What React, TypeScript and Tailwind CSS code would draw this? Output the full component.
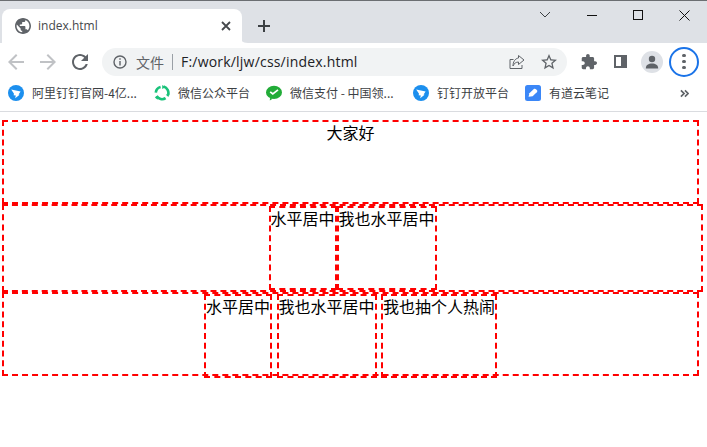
import React from "react";

const cjk = '"Noto Sans CJK SC", "Noto Sans", sans-serif';

function Dingtalk() {
  return (
    <svg width="16" height="16" viewBox="0 0 16 16" className="shrink-0">
      <circle cx="8" cy="8" r="8" fill="#1c8fee" />
      <path d="M3.2 4.6 L12.6 6.4 L10.6 9.6 L11.6 9.7 L7.2 13.2 L7.8 10.6 L5.6 10.2 L6 8.8 Z" fill="#fff" />
    </svg>
  );
}

function GreenRing() {
  return (
    <svg width="16" height="16" viewBox="0 0 16 16" className="shrink-0" fill="none">
      <path d="M9.6 1.6 A6.4 6.4 0 0 1 14 10" stroke="#19c27a" strokeWidth="2.6" />
      <path d="M11.6 13.2 A6.4 6.4 0 0 1 2.6 11" stroke="#19c27a" strokeWidth="2.6" />
      <path d="M1.8 7.6 A6.4 6.4 0 0 1 6.6 1.9" stroke="#19c27a" strokeWidth="2.6" />
      <path d="M8.2 0 L11.4 2.2 L8.2 4 Z M15.6 8.4 L14.4 12 L11.8 9.8 Z M3.6 14.8 L0.8 12.4 L4 10.8 Z" fill="#19c27a" />
    </svg>
  );
}

function WechatPay() {
  return (
    <svg width="16" height="16" viewBox="0 0 16 16" className="shrink-0">
      <ellipse cx="8" cy="7.4" rx="8" ry="6.6" fill="#22ac38" />
      <path d="M4 13 L3.8 15.6 L7 13.6 Z" fill="#22ac38" />
      <path d="M4.2 6.8 L6.8 9 L12 4.8" stroke="#fff" strokeWidth="1.7" fill="none" />
    </svg>
  );
}

function Youdao() {
  return (
    <svg width="16" height="16" viewBox="0 0 16 16" className="shrink-0">
      <rect width="16" height="16" rx="2.5" fill="#3b87f7" />
      <path d="M3.6 11.8 L4.4 8.2 L8.8 4 C9.6 3.4 10.4 3.6 11 4.2 L12 5.2 C12.5 5.8 12.4 6.6 11.8 7.2 L7.6 11.2 Z" fill="#fff" />
    </svg>
  );
}

function Bookmark({ icon, text, className }: { icon: React.ReactNode; text: string; className: string }) {
  return (
    <div className={`flex items-center gap-2 shrink-0 ${className}`}>
      {icon}
      <span className="text-[12px] leading-4 text-[#3c4043] whitespace-nowrap" style={{ fontFamily: cjk }}>
        {text}
      </span>
    </div>
  );
}

function Box({ w, h, className, children }: { w: string; h: string; className?: string; children?: React.ReactNode }) {
  return (
    <div
      className={`${w} ${h} shrink-0 border-2 border-dashed border-[#ff0000] text-[16px] leading-[21px] text-black whitespace-nowrap ${className ?? ""}`}
      style={{ fontFamily: cjk }}
    >
      {children}
    </div>
  );
}

export default function App() {
  return (
    <div className="w-[707px] h-[447px] bg-white overflow-hidden flex flex-col">
      {/* tab strip */}
      <div className="h-[43px] shrink-0 bg-[#dee1e6] border-t border-[#6b6e72] flex items-end relative">
        <div className="ml-[2px] w-[240px] h-[34px] bg-white rounded-t-[8px] flex items-center relative">
          <svg width="16" height="16" viewBox="2 2 20 20" className="ml-[13px]" fill="#5f6368">
            <path d="M12 2C6.48 2 2 6.48 2 12s4.48 10 10 10 10-4.48 10-10S17.52 2 12 2zm-1 17.93c-3.95-.49-7-3.85-7-7.93 0-.62.08-1.21.21-1.79L9 15v1c0 1.1.9 2 2 2v1.93zm6.9-2.54c-.26-.81-1-1.39-1.9-1.39h-1v-3c0-.55-.45-1-1-1H8v-2h2c.55 0 1-.45 1-1V7h2c1.1 0 2-.9 2-2v-.41c2.93 1.19 5 4.06 5 7.41 0 2.08-.8 3.97-2.1 5.39z" />
          </svg>
          <span className="ml-[7px] text-[12px] text-[#45484c]" style={{ fontFamily: '"Open Sans", sans-serif' }}>
            index.html
          </span>
          <svg width="10" height="10" viewBox="0 0 10 10" className="ml-auto mr-[11px]" stroke="#45484c" strokeWidth="1.8">
            <path d="M1 1 L9 9 M9 1 L1 9" />
          </svg>
          <svg width="8" height="8" viewBox="0 0 8 8" className="absolute right-[-6px] bottom-0" fill="#fff">
            <path d="M0 0 C0 5 2 8 8 8 L0 8 Z" />
          </svg>
        </div>
        <svg width="12" height="12" viewBox="0 0 12 12" className="ml-[16px] mb-[11px]" stroke="#3c4043" strokeWidth="2">
          <path d="M6 0 V12 M0 6 H12" />
        </svg>
        <div className="ml-auto h-full flex items-start">
          <svg width="12" height="8" viewBox="0 0 12 8" className="mt-[10px] mr-[36px]" fill="none" stroke="#3c4043" strokeWidth="1">
            <path d="M1 1 L6 6 L11 1" />
          </svg>
          <svg width="10" height="10" viewBox="0 0 10 10" className="mt-[9px] mr-[36px]" stroke="#111" strokeWidth="1">
            <path d="M0 5.5 H10" />
          </svg>
          <svg width="10" height="10" viewBox="0 0 10 10" className="mt-[9px] mr-[36px]" fill="none" stroke="#111" strokeWidth="1">
            <rect x="0.5" y="0.5" width="9" height="9" />
          </svg>
          <svg width="11" height="11" viewBox="0 0 11 11" className="mt-[9px] mr-[17px]" stroke="#111" strokeWidth="1">
            <path d="M0.5 0.5 L10.5 10.5 M10.5 0.5 L0.5 10.5" />
          </svg>
        </div>
      </div>

      {/* toolbar */}
      <div className="h-[37px] shrink-0 bg-white flex items-center">
        <svg width="16" height="16" viewBox="4 4 16 16" className="ml-[8px]" fill="#c0c2c5">
          <path d="M20 11H7.83l5.59-5.59L12 4l-8 8 8 8 1.41-1.41L7.83 13H20v-2z" />
        </svg>
        <svg width="16" height="16" viewBox="4 4 16 16" className="ml-[16px]" fill="#c0c2c5">
          <path d="M12 4l-1.41 1.41L16.17 11H4v2h12.17l-5.58 5.59L12 20l8-8z" />
        </svg>
        <svg width="16" height="16" viewBox="4 4 16 16" className="ml-[16px]" fill="#5f6368">
          <path d="M17.65 6.35C16.2 4.9 14.21 4 12 4c-4.42 0-7.99 3.58-7.99 8s3.57 8 7.99 8c3.73 0 6.84-2.55 7.73-6h-2.08c-.82 2.33-3.04 4-5.65 4-3.31 0-6-2.69-6-6s2.69-6 6-6c1.66 0 3.14.69 4.22 1.78L13 11h7V4l-2.35 2.35z" />
        </svg>
        <div className="ml-[14px] w-[465px] h-[28px] rounded-full bg-[#f1f3f4] flex items-center">
          <svg width="14" height="14" viewBox="0 0 14 14" className="ml-[11px]" fill="none" stroke="#5f6368" strokeWidth="1.4">
            <circle cx="7" cy="7" r="6" />
            <path d="M7 6 V10.5 M7 3.2 V4.8" />
          </svg>
          <span className="ml-[9px] text-[14px] leading-5 text-[#5f6368]" style={{ fontFamily: cjk }}>
            文件
          </span>
          <div className="ml-[8px] w-px h-[16px] bg-[#9aa0a6]" />
          <span className="ml-[8px] text-[14px] leading-5 tracking-[0.2px] text-[#202124]" style={{ fontFamily: '"Open Sans", sans-serif' }}>
            F:/work/ljw/css/index.html
          </span>
          <svg width="16" height="16" viewBox="0 0 16 16" className="ml-auto" fill="none" stroke="#5f6368" strokeWidth="1">
            <path d="M4.5 5.5 H1 V14.5 H13 V11" />
            <path d="M9.5 1.5 L15 6 L9.5 10.5 V8 C7 8 5 9.5 4 12 C4 8 6 4.5 9.5 4 Z" />
          </svg>
          <svg width="16" height="16" viewBox="2 2 20 20" className="ml-[16px] mr-[10px]" fill="#5f6368">
            <path d="M22 9.24l-7.19-.62L12 2 9.19 8.63 2 9.24l5.46 4.73L5.82 21 12 17.27 18.18 21l-1.63-7.03L22 9.24zM12 15.4l-3.76 2.27 1-4.28-3.32-2.88 4.38-.38L12 6.1l1.71 4.04 4.38.38-3.32 2.88 1 4.28L12 15.4z" />
          </svg>
        </div>
        <svg width="16" height="16" viewBox="1 1 22 22" className="ml-[14px]" fill="#5f6368">
          <path d="M20.5 11H19V7c0-1.1-.9-2-2-2h-4V3.5C13 2.12 11.88 1 10.5 1S8 2.12 8 3.5V5H4c-1.1 0-1.99.9-1.99 2v3.8H3.5c1.49 0 2.7 1.21 2.7 2.7s-1.21 2.7-2.7 2.7H2V20c0 1.1.9 2 2 2h3.8v-1.5c0-1.49 1.21-2.7 2.7-2.7 1.49 0 2.7 1.21 2.7 2.7V22H17c1.1 0 2-.9 2-2v-4h1.5c1.38 0 2.5-1.12 2.5-2.5S21.88 11 20.5 11z" />
        </svg>
        <div className="ml-[17px] w-[13px] h-[13px] border-2 border-r-[6px] border-[#5f6368]" />
        <div className="ml-[14px] w-[22px] h-[22px] rounded-full bg-[#dee1e6] flex items-center justify-center">
          <svg width="14" height="14" viewBox="0 0 14 14" fill="#5f6368">
            <circle cx="7" cy="4" r="3.2" />
            <path d="M0.8 13.5 C0.8 10 3.5 8.6 7 8.6 C10.5 8.6 13.2 10 13.2 13.5 Z" />
          </svg>
        </div>
        <div className="ml-[6px] w-[30px] h-[30px] rounded-full border-2 border-[#1a73e8] flex flex-col items-center justify-center gap-[2.5px]">
          <span className="w-[3.5px] h-[3.5px] rounded-full bg-[#5f6368]" />
          <span className="w-[3.5px] h-[3.5px] rounded-full bg-[#5f6368]" />
          <span className="w-[3.5px] h-[3.5px] rounded-full bg-[#5f6368]" />
        </div>
      </div>

      {/* bookmarks */}
      <div className="h-[32px] shrink-0 bg-white border-b border-[#dadce0] flex items-center pl-[8px] pb-[5px]">
        <Bookmark icon={<Dingtalk />} text="阿里钉钉官网-4亿..." className="w-[146px]" />
        <Bookmark icon={<GreenRing />} text="微信公众平台" className="w-[112px]" />
        <Bookmark icon={<WechatPay />} text="微信支付 - 中国领..." className="w-[147px]" />
        <Bookmark icon={<Dingtalk />} text="钉钉开放平台" className="w-[112px]" />
        <Bookmark icon={<Youdao />} text="有道云笔记" className="w-[155px]" />
        <svg width="9" height="9" viewBox="0 0 10 10" fill="none" stroke="#5f6368" strokeWidth="1.9">
          <path d="M1 1.5 L4.5 5 L1 8.5 M5.5 1.5 L9 5 L5.5 8.5" />
        </svg>
      </div>

      {/* page */}
      <div className="flex-1 pl-[2px] pt-[8px] flex flex-col items-start">
        <Box w="w-[697px]" h="h-[84px]" className="text-center">
          大家好
        </Box>
        <Box w="w-[701px]" h="h-[88px]" className="flex justify-center">
          <Box w="w-[68px]" h="h-[84px]">水平居中</Box>
          <Box w="w-[100px]" h="h-[84px]">我也水平居中</Box>
        </Box>
        <Box w="w-[697px]" h="h-[84px]" className="flex justify-center gap-[4.5px]">
          <Box w="w-[68px]" h="h-[84px]">水平居中</Box>
          <Box w="w-[100px]" h="h-[84px]">我也水平居中</Box>
          <Box w="w-[116px]" h="h-[84px]">我也抽个人热闹</Box>
        </Box>
      </div>
    </div>
  );
}
